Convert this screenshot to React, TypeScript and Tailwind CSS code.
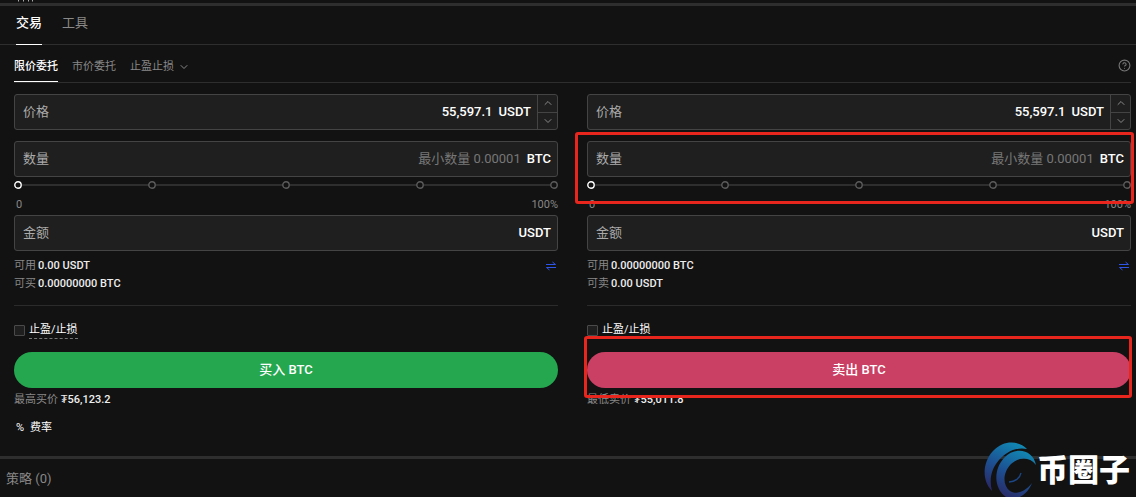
import { useState } from "react";
import { ChevronDown, ChevronUp, CircleHelp } from "lucide-react";

type Side = {
  id: string
  available: string
  tradeLabel: string
  tradeable: string
  action: string
  limitLabel: string
  limit: string
  color: string
  marked: boolean
}

const sides: Side[] = [
  { id: "buy", available: "0.00 USDT", tradeLabel: "可买", tradeable: "0.00000000 BTC", action: "买入 BTC", limitLabel: "最高买价", limit: "₮56,123.2", color: "bg-[#25a750]", marked: false },
  { id: "sell", available: "0.00000000 BTC", tradeLabel: "可卖", tradeable: "0.00 USDT", action: "卖出 BTC", limitLabel: "最低卖价", limit: "₮55,011.8", color: "bg-[#ca3f64]", marked: true },
]

const fieldBox = "flex h-9 items-center rounded-[3px] border border-[#444] bg-[#1f1f1f] text-[13px]"
const fieldInput = "min-w-0 flex-1 bg-transparent text-right text-white outline-none placeholder:text-[#777]"

function Transfer() {
  return (
    <svg width="10" height="10" viewBox="0 0 10 10" fill="none" stroke="#2f55e8" strokeWidth="1">
      <path d="M0 3.5h9.5L6.5 1M10 6.5H.5L3.5 9" />
    </svg>
  )
}

function Dot({ active }: { active: boolean }) {
  return (
    <svg width="8" height="8" viewBox="0 0 8 8" fill="#121212" className={active ? "text-white" : "text-[#5c5c5c]"}>
      <circle cx="4" cy="4" r="3.2" stroke="currentColor" strokeWidth="1.4" />
    </svg>
  )
}

function Highlight({ className }: { className: string }) {
  return <div className={`pointer-events-none absolute rounded-[3px] border-3 border-[#e8261e] ${className}`} />
}

function OrderForm({ side }: { side: Side }) {
  const [price, setPrice] = useState(55597.1)
  const [qty, setQty] = useState("")
  const [amount, setAmount] = useState("")
  const [percent, setPercent] = useState(0)

  return (
    <form className="min-w-0 flex-1" onSubmit={(e) => e.preventDefault()}>
      <div className={fieldBox}>
        <label htmlFor={`${side.id}-price`} className="pl-2 text-[#aaa]">价格</label>
        <input
          id={`${side.id}-price`}
          className={`${fieldInput} font-medium`}
          value={price.toLocaleString("en-US")}
          onChange={(e) => setPrice(Number(e.target.value.replace(/,/g, "")) || 0)}
        />
        <span className="mx-1.5 font-medium text-white">USDT</span>
        <div className="flex h-full w-5 flex-col border-l border-[#444] text-[#888]">
          <button type="button" aria-label="+" onClick={() => setPrice(price + 0.1)} className="flex flex-1 items-center justify-center border-b border-[#444]">
            <ChevronUp size={12} strokeWidth={2} />
          </button>
          <button type="button" aria-label="-" onClick={() => setPrice(price - 0.1)} className="flex flex-1 items-center justify-center">
            <ChevronDown size={12} strokeWidth={2} />
          </button>
        </div>
      </div>

      <div className="relative mt-[11px]">
        <div className={fieldBox}>
          <label htmlFor={`${side.id}-qty`} className="pl-2 text-[#aaa]">数量</label>
          <input id={`${side.id}-qty`} className={fieldInput} placeholder="最小数量 0.00001" value={qty} onChange={(e) => setQty(e.target.value)} />
          <span className="mx-1.5 font-medium text-white">BTC</span>
        </div>
        <div className="relative mt-1 h-2">
          <div className="absolute inset-x-0 top-[3px] h-0.5 bg-[#2e2e2e]" />
          <div className="relative flex justify-between">
            {[0, 25, 50, 75, 100].map((step) => <Dot key={step} active={step === percent} />)}
          </div>
          <input
            type="range"
            aria-label="数量"
            min={0}
            max={100}
            step={25}
            value={percent}
            onChange={(e) => setPercent(Number(e.target.value))}
            className="absolute inset-0 w-full cursor-pointer opacity-0"
          />
        </div>
        <div className="mt-2 flex justify-between pl-0.5 text-[11px] leading-4 text-[#888]">
          <span>0</span>
          <span>100%</span>
        </div>
        {side.marked && <Highlight className="-top-[9px] -right-[3px] bottom-[9px] -left-3" />}
      </div>

      <div className={`${fieldBox} mt-0.5`}>
        <label htmlFor={`${side.id}-amount`} className="pl-2 text-[#aaa]">金额</label>
        <input id={`${side.id}-amount`} className={fieldInput} value={amount} onChange={(e) => setAmount(e.target.value)} />
        <span className="mx-1.5 font-medium text-white">USDT</span>
      </div>

      <div className="mt-1.5 text-[11px] leading-[18px] text-[#888]">
        <div className="flex items-center justify-between">
          <p>可用<span className="ml-0.5 font-medium text-[#eee]">{side.available}</span></p>
          <button type="button" aria-label="划转" className="mr-0.5"><Transfer /></button>
        </div>
        <p>{side.tradeLabel}<span className="ml-0.5 font-medium text-[#eee]">{side.tradeable}</span></p>
      </div>

      <div className="mt-3 flex items-center gap-1 border-t border-[#2b2b2b] pt-4 text-[11px] leading-4 text-white">
        <input id={`${side.id}-tpsl`} type="checkbox" className="size-[11px] appearance-none rounded-[1px] border border-[#4a4a4a] bg-[#1f1f1f] checked:bg-white" />
        <label htmlFor={`${side.id}-tpsl`} className="border-b border-dashed border-[#777]">止盈/止损</label>
      </div>

      <div className="relative mt-[13px]">
        <button type="submit" className={`h-9 w-full rounded-full text-[13px] font-medium text-white ${side.color}`}>{side.action}</button>
        {side.marked && <Highlight className="-top-4 -right-px -bottom-[10px] -left-[3px]" />}
      </div>
      <p className="mt-1 text-[11px] leading-4 text-[#888]">
        {side.limitLabel} <span className="font-medium text-[#eee]">{side.limit}</span>
      </p>
    </form>
  )
}

function Watermark() {
  return (
    <div className="pointer-events-none absolute right-1.5 bottom-0 flex items-center">
      <svg width="53" height="57" viewBox="0 0 53 57">
        <defs>
          <linearGradient id="swirl" x1="0.7" y1="0" x2="0.3" y2="1">
            <stop offset="0" stopColor="#1187b2" />
            <stop offset="0.5" stopColor="#1c5394" />
            <stop offset="1" stopColor="#292a68" />
          </linearGradient>
        </defs>
        <path fill="url(#swirl)" d="M43 7C36-1 20-3 9 9-2 21-2 39 8 49 5 38 7 27 15 18 23 9 33 5 43 7Z" />
        <path fill="url(#swirl)" d="M52 23C49 7 31 4 20 16 9 28 10 47 22 55c10 4 21-1 26-14-7 9-16 12-22 8-8-6-7-19 1-27 8-7 18-8 25 1Z" />
        <path fill="none" stroke="#1c4684" strokeWidth="1.3" d="M25 40c6 0 11-4 12-9" />
      </svg>
      <span className="text-[31px] leading-8 font-black text-white">币圈子</span>
    </div>
  )
}

export default function App() {
  const [tab, setTab] = useState("交易")
  const [orderType, setOrderType] = useState("限价委托")

  return (
    <main className="relative min-h-screen overflow-hidden bg-[#121212] font-[Roboto,'Noto_Sans_CJK_SC',sans-serif]">
      <div className="h-[3px] pl-[17px]">
        <svg width="18" height="2" viewBox="0 0 18 2" stroke="#aaa" strokeWidth="1">
          <path d="M1.5 0v1.5M6.5 0v1.5M11.5 0v1.5M15.5 0v1.5" />
        </svg>
      </div>
      <div className="h-[3px] bg-[#2e2e2e]" />
      <nav className="flex h-[39px] gap-5 border-b border-[#2e2e2e] px-4 text-[13px]">
        {["交易", "工具"].map((name) => (
          <button
            key={name}
            onClick={() => setTab(name)}
            className={`-mb-px border-b pb-1 ${tab === name ? "border-white font-medium text-white" : "border-transparent text-[#888]"}`}
          >
            {name}
          </button>
        ))}
      </nav>

      <section className="pr-[5px] pl-3.5">
        <div className="flex h-[38px] items-stretch border-b border-[#2e2e2e] text-[11px]">
          <button
            onClick={() => setOrderType("限价委托")}
            className={`border-b pt-2 ${orderType === "限价委托" ? "border-white font-medium text-white" : "border-transparent text-[#888]"}`}
          >
            限价委托
          </button>
          <button
            onClick={() => setOrderType("市价委托")}
            className={`ml-3.5 border-b pt-2 ${orderType === "市价委托" ? "border-white font-medium text-white" : "border-transparent text-[#888]"}`}
          >
            市价委托
          </button>
          <button className="ml-3.5 flex items-center gap-1 border-b border-transparent pt-2 text-[#888]">
            止盈止损
            <ChevronDown size={12} />
          </button>
          <button aria-label="帮助" className="ml-auto pt-1 text-[#777]">
            <CircleHelp size={13} strokeWidth={2} />
          </button>
        </div>

        <div className="mt-[11px] flex gap-[29px]">
          {sides.map((side) => <OrderForm key={side.id} side={side} />)}
        </div>

        <a href="#fees" className="mt-3 inline-flex items-center gap-1.5 pl-0.5 text-[11px] leading-4 text-white">
          <span>%</span>
          <span>费率</span>
        </a>
      </section>

      <footer className="mt-[18px] border-t-3 border-[#2e2e2e] px-1.5 py-2 text-[13px] leading-6 text-[#888]">策略 (0)</footer>
      <Watermark />
    </main>
  )
}
